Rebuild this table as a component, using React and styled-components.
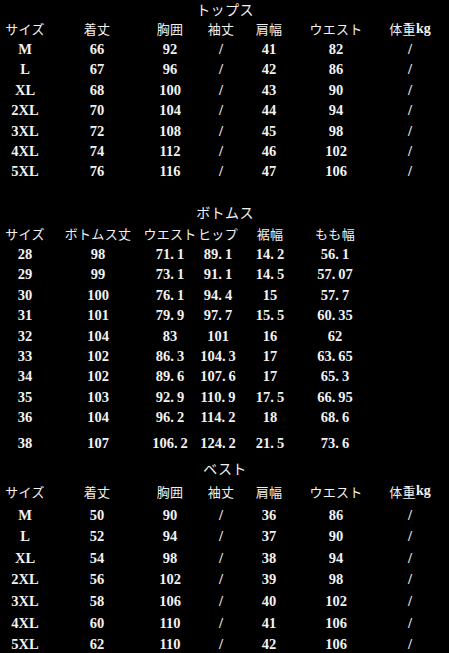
import React from "react";
import styled, { createGlobalStyle } from "styled-components";

const Global = createGlobalStyle`
  html, body { margin: 0; padding: 0; background: #000; }
  body { width: 449px; height: 653px; overflow: hidden; }
`;

const Page = styled.div`
  width: 449px;
  height: 653px;
  background: #000;
  color: #f2f2f2;
  font-family: "Liberation Serif", "Noto Sans CJK JP", serif;
  display: flex;
  flex-direction: column;
`;

const Section = styled.section`
  display: flex;
  flex-direction: column;
  margin-top: ${(p) => p.$mt || 0}px;
`;

const Title = styled.div`
  height: ${(p) => p.$h}px;
  display: flex;
  align-items: center;
  justify-content: center;
  font-family: "Noto Sans CJK JP", sans-serif;
  font-size: 14px;
  line-height: 1;
  letter-spacing: 0.4px;
  padding-left: 1px;
`;

const Row = styled.div`
  display: grid;
  grid-template-columns: ${(p) => p.$cols};
  height: ${(p) => p.$h}px;
  margin-top: ${(p) => p.$mt || 0}px;
`;

const HeadCell = styled.div`
  display: flex;
  align-items: center;
  justify-content: center;
  white-space: nowrap;
  font-family: "Noto Sans CJK JP", sans-serif;
  font-size: 13px;
  line-height: 1;
  letter-spacing: 0.3px;
  & b {
    font-family: "Liberation Serif", serif;
    font-size: 14px;
    font-weight: 700;
    letter-spacing: 0;
  }
`;

const Cell = styled.div`
  display: flex;
  align-items: center;
  justify-content: center;
  white-space: nowrap;
  font-size: 14.5px;
  font-weight: 700;
  line-height: 1;
`;

const Dot = styled.span`
  padding-right: 3px;
`;

const TOP_COLS = "50px 94px 52px 50px 46px 88px 60px";
const BOT_COLS = "50px 96px 48px 48px 56px 74px";

const tops = [
  ["M", "66", "92", "/", "41", "82", "/"],
  ["L", "67", "96", "/", "42", "86", "/"],
  ["XL", "68", "100", "/", "43", "90", "/"],
  ["2XL", "70", "104", "/", "44", "94", "/"],
  ["3XL", "72", "108", "/", "45", "98", "/"],
  ["4XL", "74", "112", "/", "46", "102", "/"],
  ["5XL", "76", "116", "/", "47", "106", "/"],
];

const bottoms = [
  ["28", "98", "71.1", "89.1", "14.2", "56.1"],
  ["29", "99", "73.1", "91.1", "14.5", "57.07"],
  ["30", "100", "76.1", "94.4", "15", "57.7"],
  ["31", "101", "79.9", "97.7", "15.5", "60.35"],
  ["32", "104", "83", "101", "16", "62"],
  ["33", "102", "86.3", "104.3", "17", "63.65"],
  ["34", "102", "89.6", "107.6", "17", "65.3"],
  ["35", "103", "92.9", "110.9", "17.5", "66.95"],
  ["36", "104", "96.2", "114.2", "18", "68.6"],
  ["38", "107", "106.2", "124.2", "21.5", "73.6"],
];

const vest = [
  ["M", "50", "90", "/", "36", "86", "/"],
  ["L", "52", "94", "/", "37", "90", "/"],
  ["XL", "54", "98", "/", "38", "94", "/"],
  ["2XL", "56", "102", "/", "39", "98", "/"],
  ["3XL", "58", "106", "/", "40", "102", "/"],
  ["4XL", "60", "110", "/", "41", "106", "/"],
  ["5XL", "62", "110", "/", "42", "106", "/"],
];

const topHead = ["サイズ", "着丈", "胸囲", "袖丈", "肩幅", "ウエスト", null];
const botHead = ["サイズ", "ボトムス丈", "ウエスト", "ヒップ", "裾幅", "もも幅"];

function Value({ v }) {
  const i = v.indexOf(".");
  if (i < 0) return v;
  return (
    <>
      {v.slice(0, i)}
      <Dot>.</Dot>
      {v.slice(i + 1)}
    </>
  );
}

function Header({ cols, h, items }) {
  return (
    <Row $cols={cols} $h={h}>
      {items.map((t, i) => (
        <HeadCell key={i}>
          {t === null ? (
            <>
              体重<b>kg</b>
            </>
          ) : (
            t
          )}
        </HeadCell>
      ))}
    </Row>
  );
}

function DataRows({ rows, cols, h, lastGap = 0 }) {
  return rows.map((r, i) => (
    <Row key={i} $cols={cols} $h={h} $mt={i === rows.length - 1 ? lastGap : 0}>
      {r.map((v, j) => (
        <Cell key={j}>
          <Value v={v} />
        </Cell>
      ))}
    </Row>
  ));
}

export default function App() {
  return (
    <>
      <Global />
      <Page>
        <Section>
          <Title $h={18}>トップス</Title>
          <Header cols={TOP_COLS} h={21} items={topHead} />
          <DataRows rows={tops} cols={TOP_COLS} h={20.4} />
        </Section>
        <Section $mt={20.4}>
          <Title $h={20}>ボトムス</Title>
          <Header cols={BOT_COLS} h={22} items={botHead} />
          <DataRows rows={bottoms} cols={BOT_COLS} h={20.4} lastGap={5.2} />
        </Section>
        <Section $mt={4.8}>
          <Title $h={20}>ベスト</Title>
          <Header cols={TOP_COLS} h={26} items={topHead} />
          <DataRows rows={vest} cols={TOP_COLS} h={21.6} />
        </Section>
      </Page>
    </>
  );
}
